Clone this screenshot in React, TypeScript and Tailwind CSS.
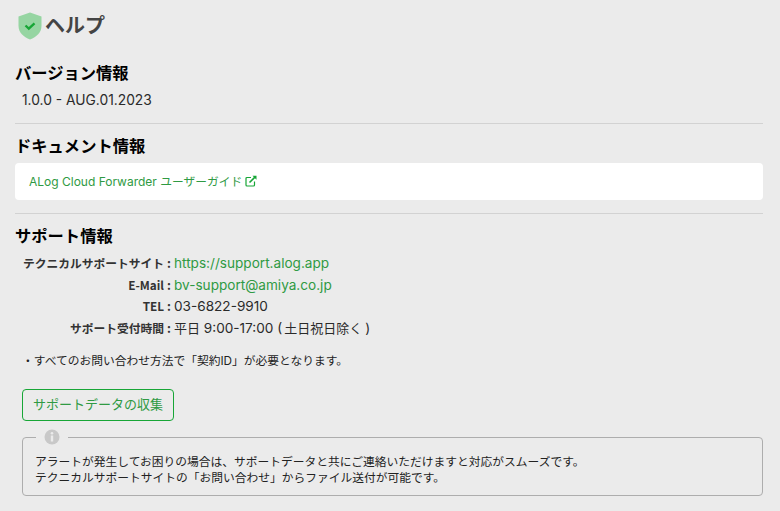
const FONT = "font-['Inter','Noto_Sans_CJK_JP',sans-serif]";

function ShieldIcon() {
  return (
    <svg width="24" height="28" viewBox="0 0 24 28" className="shrink-0">
      <path d="M12 0.5 L23.5 4.5 V14 C23.5 20.5 18.5 25 12 27.5 C5.500 25 0.500 20.500 0.500 14 V4.500 Z" fill="#96d5a2" />
      <path d="M7.500 13.500 L10.800 16.700 L16.500 11.300" fill="none" stroke="#17a636" strokeWidth="2.300" />
    </svg>
  );
}

function Row({ label, children }: { label: string; children: React.ReactNode }) {
  return (
    <div className="flex h-[21.5px] items-center">
      <div className="w-[142px] shrink-0 text-right font-['Noto_Sans_CJK_JP',sans-serif] text-[11.76px] font-bold text-[#333]">{label}</div>
      <div className="w-[10px] shrink-0 text-center font-['Noto_Sans_CJK_JP',sans-serif] text-[12px] font-bold text-[#333]">:</div>
      <div className="text-[13.6px] text-[#2a2a2a]">{children}</div>
    </div>
  );
}

export default function App() {
  return (
    <div className={`${FONT} h-[511px] w-[780px] overflow-hidden bg-[#ebebeb] px-[15px] pt-[11px] pr-[17px] text-[#222]`}>
      <div className="ml-[3px] flex h-[30px] items-center gap-[3px]">
        <ShieldIcon />
        <h1 className="text-[20px] font-bold leading-none text-[#444]">ヘルプ</h1>
      </div>

      <h2 className="mt-[20px] text-[16.3px] font-bold leading-[24px] text-black">バージョン情報</h2>
      <p className="mt-[5px] pl-[7px] text-[13.8px] leading-[20px] text-[#2a2a2a]">1.0.0 - AUG.01.2023</p>

      <hr className="mt-[13px] border-t border-[#d2d2d2]" />

      <h2 className="mt-[10px] text-[16.3px] font-bold leading-[24px] text-black">ドキュメント情報</h2>
      <div className="mt-[5px] flex h-[37px] items-center rounded-[4px] bg-white px-[14px] pt-[1px] text-[12px] text-[#2f9a43]">
        <span>
          ALog Cloud Forwarder <span className="text-[11.76px]">ユーザーガイド</span>
        </span>
        <svg width="12" height="12" viewBox="0 0 12 12" className="ml-[3px] mb-[2px]" fill="none" stroke="#17a636" strokeWidth="1.200">
          <path d="M6 2.500 H2 Q1 2.500 1 3.500 V10 Q1 11 2 11 H8.500 Q9.500 11 9.500 10 V6.500" />
          <path d="M4.500 7.500 L10.500 1.500" strokeWidth="1.600" />
          <path d="M7.500 0.800 H11.500 V4.800 Z" fill="#17a636" stroke="none" />
        </svg>
      </div>

      <hr className="mt-[13px] border-t border-[#d2d2d2]" />

      <h2 className="mt-[10px] text-[16.3px] font-bold leading-[24px] text-black">サポート情報</h2>
      <div className="mt-[4.5px] pl-[7px]">
        <Row label="テクニカルサポートサイト">
          <a className="text-[#2f9a43]">https://support.alog.app</a>
        </Row>
        <Row label="E-Mail">
          <a className="text-[#2f9a43]">bv-support@amiya.co.jp</a>
        </Row>
        <Row label="TEL">
          <span>03-6822-9910</span>
        </Row>
        <Row label="サポート受付時間">
          <span>
            <span className="text-[13px]">平日</span> 9:00-17:00 (<span className="ml-[2px] mr-[3px] text-[13px]">土日祝日除く</span>)
          </span>
        </Row>
      </div>

      <p className="mt-[13.5px] pl-[7px] text-[11.76px] leading-[18px] text-[#222]">・すべてのお問い合わせ方法で「契約ID」が必要となります。</p>

      <button className="mt-[19px] ml-[7px] block h-[32px] w-[152px] rounded-[4px] border border-[#17a636] text-[13px] font-normal text-[#2f9a43]">
        サポートデータの収集
      </button>

      <fieldset className="mt-[8px] ml-[7px] h-[67px] rounded-[4px] border border-[#adadad] pl-[12px]">
        <legend className="ml-[1px] px-[8px]">
          <svg width="16" height="16" viewBox="0 0 16 16" className="block">
            <circle cx="8" cy="8" r="7.500" fill="#c8c8c8" />
            <circle cx="8" cy="4.300" r="1.300" fill="#ebebeb" />
            <rect x="6.800" y="6.500" width="2.400" height="6" fill="#ebebeb" />
          </svg>
        </legend>
        <p className="mt-[9px] text-[11.76px] leading-[16px] text-[#222]">
          アラートが発生してお困りの場合は、サポートデータと共にご連絡いただけますと対応がスムーズです。
          <br />
          テクニカルサポートサイトの「お問い合わせ」からファイル送付が可能です。
        </p>
      </fieldset>
    </div>
  );
}
